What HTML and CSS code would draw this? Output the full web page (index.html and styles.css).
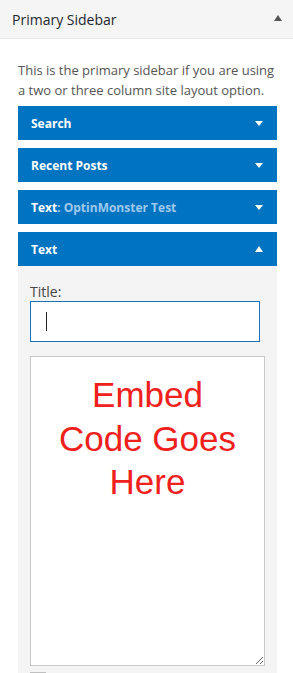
FILE: index.html
```html
<!DOCTYPE html>
<html>
<head>
<meta charset="utf-8">
<link rel="stylesheet" href="styles.css">
</head>
<body>
<div class="sidebar">
  <div class="sb-head">
    <span class="sb-title">Primary Sidebar</span>
    <span class="tri tri-up tri-gray"></span>
  </div>
  <div class="sb-body">
    <p class="desc">This is the primary sidebar if you are using a two or three column site layout option.</p>
    <div class="widgets">
      <div class="widget-bar"><span class="w-title">Search</span><span class="tri tri-down"></span></div>
      <div class="widget-bar"><span class="w-title">Recent Posts</span><span class="tri tri-down"></span></div>
      <div class="widget-bar"><span class="w-title">Text<span class="w-sub">: OptinMonster Test</span></span><span class="tri tri-down"></span></div>
      <div class="widget-open">
        <div class="widget-bar"><span class="w-title">Text</span><span class="tri tri-up"></span></div>
        <div class="widget-inside">
          <label class="field-label" for="t">Title:</label>
          <div class="input-wrap">
            <input id="t" class="title-input" type="text">
            <span class="caret"></span>
          </div>
          <textarea class="embed">Embed
Code Goes
Here</textarea>
          <div class="check"></div>
        </div>
      </div>
    </div>
  </div>
</div>
</body>
</html>
```
FILE: styles.css
```css
* { box-sizing: border-box; }
html, body { margin: 0; padding: 0; background: #fff; }
body { font-family: "Open Sans", "Liberation Sans", sans-serif; color: #444; overflow: hidden; height: 673px; }

.sb-head {
  height: 39px;
  background: #f5f5f5;
  border-bottom: 1px solid #e8e8e8;
  display: flex;
  align-items: center;
  justify-content: space-between;
  padding: 0 11px 0 12px;
}
.sb-title { font-size: 14px; color: #23282d; }

.tri { width: 0; height: 0; border-left: 4px solid transparent; border-right: 4px solid transparent; }
.tri-up { border-bottom: 6px solid #fff; }
.tri-down { border-top: 5px solid #fff; }
.tri-gray { border-bottom-color: #555; margin-top: -2px; }

.sb-body { padding: 0 16px 0 18px; }
.desc { margin: 0; padding: 21px 0 0; font-size: 13px; line-height: 20px; color: #555; }

.widgets { display: flex; flex-direction: column; gap: 8px; margin-top: 6px; }
.widget-bar {
  height: 34px;
  background: #0073c1;
  display: flex;
  align-items: center;
  justify-content: space-between;
  padding: 0 14px 0 13px;
  color: #fff;
  font-weight: 700;
  font-size: 12px;
}
.w-sub { color: #9fcaee; }

.widget-inside { background: #f4f4f4; padding: 17px 12px 20px; }
.field-label { display: block; font-size: 14px; line-height: 18px; color: #444; }
.input-wrap { position: relative; width: 230px; }
.title-input {
  display: block;
  width: 230px;
  height: 41px;
  border: 1px solid #1a73ba;
  background: #fff;
  outline: none;
  margin: 0;
}
.caret { position: absolute; left: 16px; top: 11px; width: 1px; height: 19px; background: #222; }

.embed {
  display: block;
  width: 235px;
  height: 310px;
  margin: 14px 0 0;
  border: 1px solid #c8c8c8;
  background: #fff;
  color: #f0201c;
  font-family: "Liberation Sans", Arial, sans-serif;
  font-size: 35px;
  line-height: 43.5px;
  text-align: center;
  padding: 16px 4px 0;
  resize: both;
  overflow: hidden;
}
.check { width: 16px; height: 16px; border: 1px solid #c0c0c0; background: #fff; margin-top: 6px; }
```
